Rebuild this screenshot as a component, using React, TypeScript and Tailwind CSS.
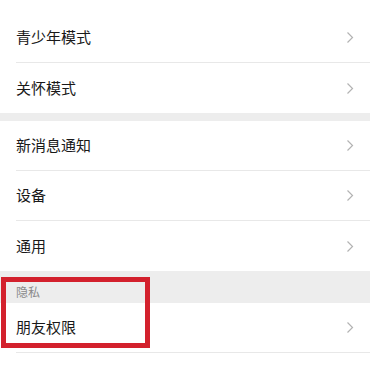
const font = { fontFamily: '"Noto Sans CJK SC", "Noto Sans", sans-serif' };

function Chevron() {
  return (
    <svg width="8" height="13" viewBox="0 0 8 13" fill="none" className="mr-[16px]">
      <path d="M1.5 1.5 L6.5 6.5 L1.5 11.5" stroke="#b3b3b3" strokeWidth="1.2" />
    </svg>
  );
}

function Row({ label, divider = true }: { label: string; divider?: boolean }) {
  return (
    <div className="bg-white pl-4">
      <div
        className={`flex h-[50px] items-center justify-between ${divider ? 'border-b border-[#e8e8e8]' : ''}`}
      >
        <span className="text-[15px] text-[#191919]">{label}</span>
        <Chevron />
      </div>
    </div>
  );
}

export default function App() {
  return (
    <div className="relative h-[366px] w-[370px] overflow-hidden bg-white" style={font}>
      <div className="h-[13px] bg-white" />
      <Row label="青少年模式" />
      <Row label="关怀模式" divider={false} />
      <div className="h-[8px] bg-[#ededed]" />
      <Row label="新消息通知" />
      <Row label="设备" />
      <Row label="通用" divider={false} />
      <div className="flex h-[32px] items-end bg-[#ededed] pb-[2px] pl-4">
        <span className="text-[12px] text-[#8a8a8a]">隐私</span>
      </div>
      <Row label="朋友权限" />
      <div className="absolute left-[1px] top-[277px] h-[71px] w-[149px] border-[5px] border-[#d3212d]" />
    </div>
  );
}
